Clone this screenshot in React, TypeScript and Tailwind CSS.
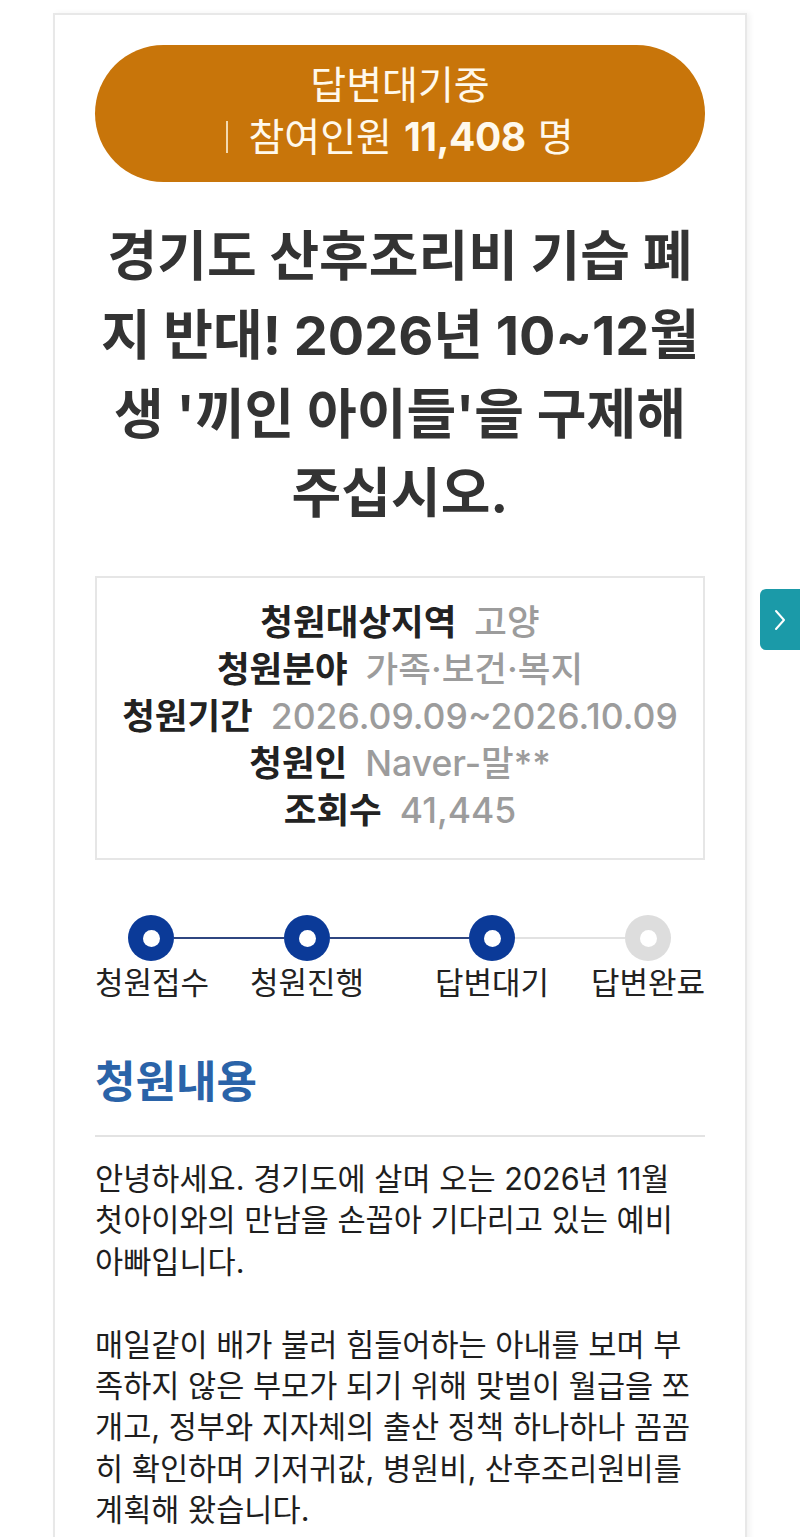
import React from "react";

const steps = [
    { label: "청원접수", done: true },
    { label: "청원진행", done: true },
    { label: "답변대기", done: true },
    { label: "답변완료", done: false },
];

const info = [
    { label: "청원대상지역", value: "고양" },
    { label: "청원분야", value: "가족·보건·복지" },
    { label: "청원기간", value: "2026.09.09~2026.10.09" },
    { label: "청원인", value: "Naver-말**" },
    { label: "조회수", value: "41,445" },
];

const titleLines = [
    "경기도 산후조리비 기습 폐",
    "지 반대! 2026년 10~12월",
    "생 '끼인 아이들'을 구제해",
    "주십시오.",
];

const para1 = [
    "안녕하세요. 경기도에 살며 오는 2026년 11월",
    "첫아이와의 만남을 손꼽아 기다리고 있는 예비",
    "아빠입니다.",
];

const para2 = [
    "매일같이 배가 불러 힘들어하는 아내를 보며 부",
    "족하지 않은 부모가 되기 위해 맞벌이 월급을 쪼",
    "개고, 정부와 지자체의 출산 정책 하나하나 꼼꼼",
    "히 확인하며 기저귀값, 병원비, 산후조리원비를",
    "계획해 왔습니다.",
];

function StepDot({ done }: { done: boolean }) {
    return (
        <div className={`w-[46px] h-[46px] rounded-full flex items-center justify-center shrink-0 ${done ? "bg-[#0b3a98]" : "bg-[#dddddd]"}`}>
            <div className="w-[17px] h-[17px] rounded-full bg-white" />
        </div>
    )
}

export default function App() {
    return (
        <div className="relative min-h-[1537px] bg-white overflow-hidden font-['Inter','Noto_Sans_CJK_KR',sans-serif]">
            <div className="mx-auto mt-[13px] w-[694px] border-2 border-b-0 border-[#e8e8e8] px-[40px] pt-[30px] pb-[40px] shadow-[3px_0_6px_rgba(0,0,0,0.05)]">
                {/* 상태 배지 */}
                <div className="rounded-full bg-[#c8750a] text-[#fff9ec] text-[39px] leading-[52px] pt-[14px] pb-[19px] flex flex-col items-center">
                    <div>답변대기중</div>
                    <div className="flex items-center">
                        <span className="w-[2px] h-[32px] bg-[#f3d9b0] mr-[20px]" />
                        <span>참여인원</span>
                        <span className="font-bold ml-[12px] mr-[12px] tracking-[-0.5px]">11,408</span>
                        <span>명</span>
                    </div>
                </div>

                {/* 제목 */}
                <h1 className="mt-[35px] text-center text-[54px] leading-[79px] font-bold text-[#333333] -mx-[10px]">
                    {titleLines.map((line) => (
                        <span key={line} className="block whitespace-nowrap">{line}</span>
                    ))}
                </h1>

                {/* 청원 정보 */}
                <div className="mt-[43px] border-2 border-[#e6e6e6] pt-[21px] pb-[24px]">
                    {info.map((row) => (
                        <div key={row.label} className="flex justify-center gap-[18px] text-[35.5px] leading-[47px] whitespace-nowrap">
                            <span className="font-bold text-[#222222]">{row.label}</span>
                            <span className="font-medium text-[#9c9c9c]">{row.value}</span>
                        </div>
                    ))}
                </div>

                {/* 진행 단계 */}
                <div className="mt-[55px]">
                    <div className="flex items-center pl-[33px]">
                        <StepDot done={steps[0].done} />
                        <div className="w-[110px] h-[2px] bg-[#2f4680]" />
                        <StepDot done={steps[1].done} />
                        <div className="w-[139px] h-[2px] bg-[#2f4680]" />
                        <StepDot done={steps[2].done} />
                        <div className="w-[110px] h-[2px] bg-[#e2e2e2]" />
                        <StepDot done={steps[3].done} />
                    </div>
                    <div className="mt-[4px] flex text-[31px] leading-[36px] text-[#222222] whitespace-nowrap">
                        <span className="w-[113px] text-center">{steps[0].label}</span>
                        <span className="w-[113px] ml-[42px] text-center">{steps[1].label}</span>
                        <span className="w-[113px] ml-[72px] text-center">{steps[2].label}</span>
                        <span className="w-[113px] ml-[43px] text-center">{steps[3].label}</span>
                    </div>
                </div>

                {/* 청원내용 */}
                <h2 className="mt-[57px] text-[44px] leading-[48px] font-bold text-[#2a63a8]">청원내용</h2>
                <div className="mt-[29px] h-[2px] bg-[#e3e3e3]" />

                <div className="mt-[21px] text-[30.6px] leading-[41.4px] text-[#1e1e1e]">
                    <p>
                        {para1.map((line) => (
                            <span key={line} className="block whitespace-nowrap">{line}</span>
                        ))}
                    </p>
                    <p className="mt-[41.4px]">
                        {para2.map((line) => (
                            <span key={line} className="block whitespace-nowrap">{line}</span>
                        ))}
                    </p>
                </div>
            </div>

            {/* 오른쪽 탭 */}
            <button className="absolute right-0 top-[589px] w-[40px] h-[61px] rounded-l-[6px] bg-[#1b9aa8] flex items-center justify-center">
                <svg width="14" height="24" viewBox="0 0 14 24" fill="none">
                    <path d="M3 3l8 9-8 9" stroke="white" strokeWidth="2" strokeLinecap="round" strokeLinejoin="round" />
                </svg>
            </button>
        </div>
    )
}
